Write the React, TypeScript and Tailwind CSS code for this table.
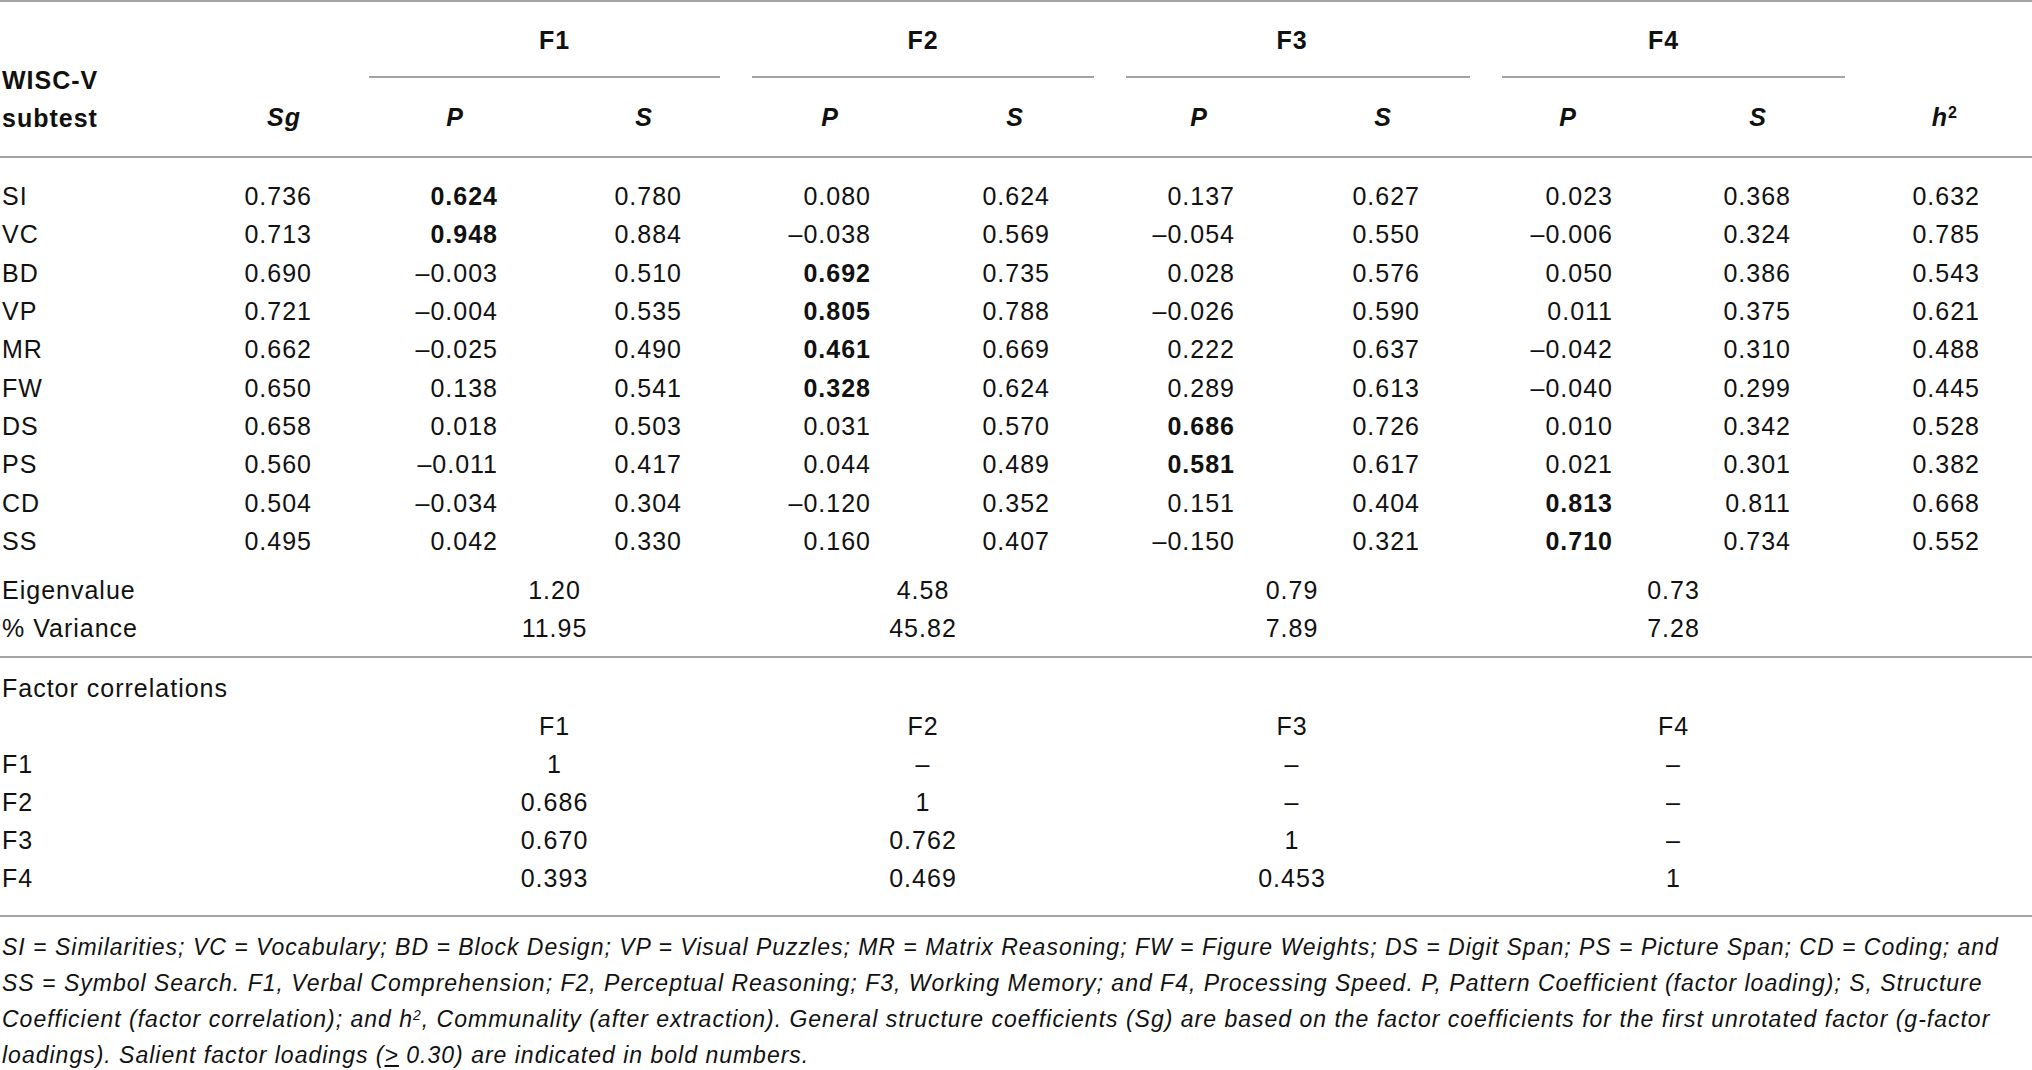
import React from 'react';

type Row = { label: string; values: string[]; bold: number };

const rows: Row[] = [
  { label: 'SI', values: ['0.736', '0.624', '0.780', '0.080', '0.624', '0.137', '0.627', '0.023', '0.368', '0.632'], bold: 1 },
  { label: 'VC', values: ['0.713', '0.948', '0.884', '–0.038', '0.569', '–0.054', '0.550', '–0.006', '0.324', '0.785'], bold: 1 },
  { label: 'BD', values: ['0.690', '–0.003', '0.510', '0.692', '0.735', '0.028', '0.576', '0.050', '0.386', '0.543'], bold: 3 },
  { label: 'VP', values: ['0.721', '–0.004', '0.535', '0.805', '0.788', '–0.026', '0.590', '0.011', '0.375', '0.621'], bold: 3 },
  { label: 'MR', values: ['0.662', '–0.025', '0.490', '0.461', '0.669', '0.222', '0.637', '–0.042', '0.310', '0.488'], bold: 3 },
  { label: 'FW', values: ['0.650', '0.138', '0.541', '0.328', '0.624', '0.289', '0.613', '–0.040', '0.299', '0.445'], bold: 3 },
  { label: 'DS', values: ['0.658', '0.018', '0.503', '0.031', '0.570', '0.686', '0.726', '0.010', '0.342', '0.528'], bold: 5 },
  { label: 'PS', values: ['0.560', '–0.011', '0.417', '0.044', '0.489', '0.581', '0.617', '0.021', '0.301', '0.382'], bold: 5 },
  { label: 'CD', values: ['0.504', '–0.034', '0.304', '–0.120', '0.352', '0.151', '0.404', '0.813', '0.811', '0.668'], bold: 7 },
  { label: 'SS', values: ['0.495', '0.042', '0.330', '0.160', '0.407', '–0.150', '0.321', '0.710', '0.734', '0.552'], bold: 7 },
];

const colWidths = ['w-[190px]', 'w-[163px]', 'w-[191px]', 'w-[192px]', 'w-[187px]', 'w-[187px]', 'w-[188px]', 'w-[188px]', 'w-[187px]', 'w-[188px]', 'w-[171px]'];

// right padding so numbers end where the reference has them
const numPad = ['pr-[41px]', 'pr-[46px]', 'pr-[54px]', 'pr-[52px]', 'pr-[60px]', 'pr-[63px]', 'pr-[66px]', 'pr-[60px]', 'pr-[70px]', 'pr-[52px]'];
const headPad = ['pr-[52px]', 'pr-[80px]', 'pr-[83px]', 'pr-[84px]', 'pr-[86px]', 'pr-[90px]', 'pr-[94px]', 'pr-[96px]', 'pr-[94px]', 'pr-[74px]'];
const headLetters = ['Sg', 'P', 'S', 'P', 'S', 'P', 'S', 'P', 'S'];

const groups = ['F1', 'F2', 'F3', 'F4'];
const groupHeadShift = ['pl-[20px]', '', 'pr-[12px]', 'pr-[20px]'];
const groupShift = ['pl-[20px]', '', 'pr-[12px]', ''];

const eigen = ['1.20', '4.58', '0.79', '0.73'];
const variance = ['11.95', '45.82', '7.89', '7.28'];
const corr = [
  ['F1', ['1', '–', '–', '–']],
  ['F2', ['0.686', '1', '–', '–']],
  ['F3', ['0.670', '0.762', '1', '–']],
  ['F4', ['0.393', '0.469', '0.453', '1']],
] as const;

const Rule = () => (
  <tr>
    <td colSpan={11} className="p-0">
      <div className="h-[2px] bg-[#a3a3a3]" />
    </td>
  </tr>
);

const Spacer = ({ h }: { h: string }) => (
  <tr className={h}>
    <td colSpan={11} className="p-0" />
  </tr>
);

const GroupRow = ({ label, cells }: { label: string; cells: readonly string[] }) => (
  <tr className="h-[38px]">
    <td className="p-0 pl-[2px] text-left leading-[38px] whitespace-nowrap">{label}</td>
    <td className="p-0" />
    {cells.map((c, i) => (
      <td key={i} colSpan={2} className={`p-0 text-center leading-[38px] ${groupShift[i]}`}>
        {c}
      </td>
    ))}
    <td className="p-0" />
  </tr>
);

export default function App() {
  return (
    <div className="w-[2032px] h-[1070px] overflow-hidden bg-white text-[#111] text-[25px] tracking-[1px] font-['Liberation_Sans',Arial,sans-serif]">
      <div className="h-[2px] bg-[#a3a3a3]" />
      <table className="w-[2032px] table-fixed border-collapse">
        <colgroup>
          {colWidths.map((w, i) => (
            <col key={i} className={w} />
          ))}
        </colgroup>
        <thead>
          <tr>
            <th rowSpan={2} className="p-0 pb-[19px] pl-[2px] text-left align-bottom font-bold leading-[38px]">
              WISC-V
              <br />
              subtest
            </th>
            <th className="p-0" />
            {groups.map((g, i) => (
              <th key={g} colSpan={2} className="p-0 align-bottom">
                <div className="mx-4 border-b-2 border-[#a3a3a3] pt-[19px] pb-[17px]">
                  <div className={`text-center font-bold leading-[38px] ${groupHeadShift[i]}`}>{g}</div>
                </div>
              </th>
            ))}
            <th className="p-0" />
          </tr>
          <tr className="h-[78px]">
            {headLetters.map((l, i) => (
              <th key={i} className={`p-0 text-right font-bold italic leading-[38px] ${headPad[i]}`}>
                {l}
              </th>
            ))}
            <th className={`p-0 text-right font-bold italic leading-[38px] ${headPad[9]}`}>
              h<sup className="text-[16px] not-italic">2</sup>
            </th>
          </tr>
        </thead>
        <tbody>
          <Rule />
          <Spacer h="h-[19px]" />
          {rows.map((r) => (
            <tr key={r.label} className="h-[38.3px]">
              <td className="p-0 pl-[2px] text-left leading-[38px]">{r.label}</td>
              {r.values.map((v, i) => (
                <td key={i} className={`p-0 text-right leading-[38px] ${numPad[i]} ${i === r.bold ? 'font-bold' : ''}`}>
                  {v}
                </td>
              ))}
            </tr>
          ))}
          <Spacer h="h-[11px]" />
          <GroupRow label="Eigenvalue" cells={eigen} />
          <GroupRow label="% Variance" cells={variance} />
          <Spacer h="h-[9px]" />
          <Rule />
          <Spacer h="h-[11px]" />
          <tr className="h-[38px]">
            <td colSpan={3} className="p-0 pl-[2px] text-left leading-[38px]">
              Factor correlations
            </td>
            <td colSpan={8} className="p-0" />
          </tr>
          <GroupRow label="" cells={groups} />
          {corr.map(([label, cells]) => (
            <GroupRow key={label} label={label} cells={cells} />
          ))}
          <Spacer h="h-[18px]" />
          <Rule />
        </tbody>
      </table>
      <p className="pt-[12px] pl-[2px] text-[23px] leading-[36px] italic tracking-[1px]">
        SI = Similarities; VC = Vocabulary; BD = Block Design; VP = Visual Puzzles; MR = Matrix Reasoning; FW = Figure
        Weights; DS = Digit Span; PS = Picture Span; CD = Coding; and SS = Symbol Search. F1, Verbal Comprehension; F2,
        Perceptual Reasoning; F3, Working Memory; and F4, Processing Speed. P, Pattern Coefficient (factor loading); S,
        Structure Coefficient (factor correlation); and h<sup className="text-[14px]">2</sup>, Communality (after
        extraction). General structure coefficients (Sg) are based on the factor coefficients for the first unrotated
        factor (g-factor loadings). Salient factor loadings (<span className="underline">&gt;</span> 0.30) are indicated
        in bold numbers.
      </p>
    </div>
  );
}
